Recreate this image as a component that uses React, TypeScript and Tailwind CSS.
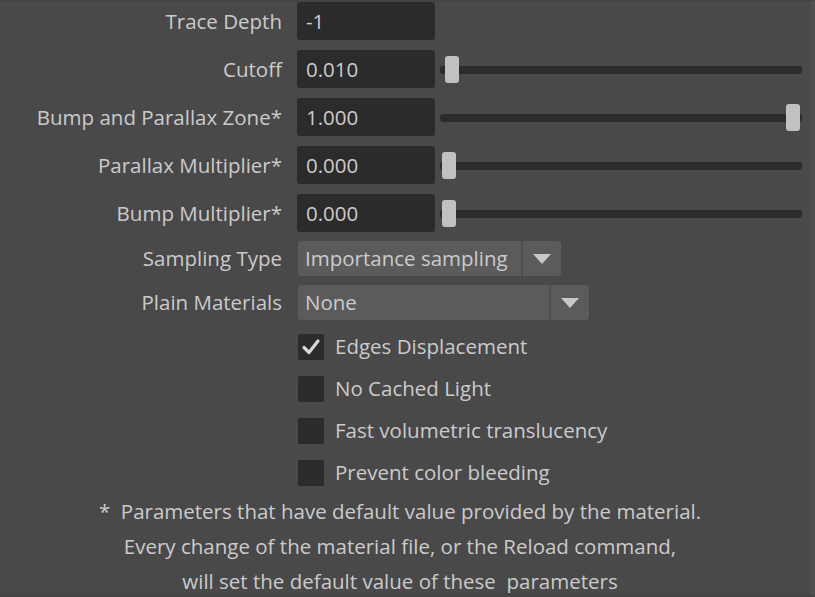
import React from "react";

const font = { fontFamily: '"Open Sans", "Noto Sans", sans-serif' };

function Slider({ pos }: { pos: number }) {
  return (
    <div className="relative ml-[5px] h-[27px] w-[362px]">
      <div className="absolute left-0 right-0 top-[10px] h-[8px] rounded-[3px] bg-[#2b2b2b]" />
      <div
        className="absolute top-0 h-[27px] w-[14px] rounded-[3px] bg-[#c1c1c1]"
        style={{ left: pos }}
      />
    </div>
  );
}

function NumRow({ label, value, slider }: { label: string; value: string; slider?: number }) {
  return (
    <div className="flex h-[38px] items-center">
      <div className="w-[282px] whitespace-nowrap text-right">{label}</div>
      <div className="ml-[15px] flex h-[38px] w-[138px] items-center rounded-[3px] bg-[#2b2b2b] pl-[9px]">
        {value}
      </div>
      {slider !== undefined && <Slider pos={slider} />}
    </div>
  );
}

function Arrow() {
  return (
    <svg width="18" height="10" viewBox="0 0 18 10">
      <polygon points="0,0 18,0 9,10" fill="#c8c8c8" />
    </svg>
  );
}

function Dropdown({ label, value, width, btn }: { label: string; value: string; width: number; btn: number }) {
  return (
    <div className="flex h-[35px] items-center">
      <div className="w-[282px] whitespace-nowrap text-right">{label}</div>
      <div className="ml-[16px] flex h-[35px]" style={{ width }}>
        <div className="flex flex-1 items-center whitespace-nowrap rounded-l-[3px] bg-[#5b5b5b] pl-[7px]">{value}</div>
        <div className="w-[2px] bg-[#4e4e4e]" />
        <div className="flex items-center justify-center rounded-r-[3px] bg-[#5b5b5b]" style={{ width: btn }}>
          <Arrow />
        </div>
      </div>
    </div>
  );
}

function Check({ label, checked }: { label: string; checked?: boolean }) {
  return (
    <div className="flex h-[25px] items-center pl-[298px]">
      <div className="flex h-[26px] w-[26px] items-center justify-center rounded-[2px] bg-[#2b2b2b]">
        {checked && (
          <svg width="20" height="18" viewBox="0 0 20 18">
            <path d="M3 9.5 L8 14.5 L17 3" stroke="#d8d8d8" strokeWidth="3.2" fill="none" strokeLinecap="round" strokeLinejoin="round" />
          </svg>
        )}
      </div>
      <div className="ml-[11px] whitespace-nowrap">{label}</div>
    </div>
  );
}

export default function App() {
  return (
    <div
      className="relative h-[597px] w-[815px] overflow-hidden border-t-[2px] border-r-[5px] border-b-[4px] border-t-[#444444] border-r-[#4f4f4f] border-b-[#444444] bg-[#494949] text-[20.5px] text-[#cbcbcb]"
      style={font}
    >
      <div className="flex flex-col gap-[10px]">
        <NumRow label="Trace Depth" value="-1" />
        <NumRow label="Cutoff" value="0.010" slider={5} />
        <NumRow label="Bump and Parallax Zone*" value="1.000" slider={346} />
        <NumRow label="Parallax Multiplier*" value="0.000" slider={2} />
        <NumRow label="Bump Multiplier*" value="0.000" slider={2} />
      </div>
      <div className="mt-[9px] flex flex-col gap-[9px]">
        <Dropdown label="Sampling Type" value="Importance sampling" width={263} btn={38} />
        <Dropdown label="Plain Materials" value="None" width={291} btn={38} />
      </div>
      <div className="mt-[14px] flex flex-col gap-[17px]">
        <Check label="Edges Displacement" checked />
        <Check label="No Cached Light" />
        <Check label="Fast volumetric translucency" />
        <Check label="Prevent color bleeding" />
      </div>
      <div className="mt-[9px] flex flex-col items-center pr-[10px] leading-[35px]">
        <div className="whitespace-pre">*  Parameters that have default value provided by the material.</div>
        <div className="whitespace-nowrap">Every change of the material file, or the Reload command,</div>
        <div className="whitespace-pre">will set the default value of these  parameters</div>
      </div>
    </div>
  );
}
